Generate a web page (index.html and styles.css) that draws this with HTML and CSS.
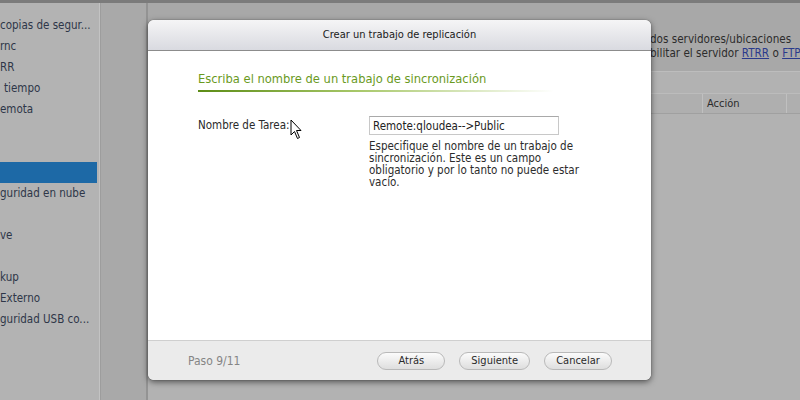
FILE: index.html
```html
<!DOCTYPE html>
<html lang="es">
<head>
    <meta charset="UTF-8">
    <meta name="viewport" content="width=device-width, initial-scale=1.0">
    <link rel="stylesheet" href="styles.css">
    <title>Crear un trabajo de replicación</title>
</head>
<body>
    <div class="topbar"></div>
    <div class="layout">
        <aside class="sidebar">
            <ul>
                <li>copias de segur...</li>
                <li>rnc</li>
                <li>RR</li>
                <li class="indent">tiempo</li>
                <li>emota</li>
                <li></li>
                <li></li>
                <li class="selected"></li>
                <li>guridad en nube</li>
                <li></li>
                <li>ve</li>
                <li></li>
                <li>kup</li>
                <li>Externo</li>
                <li>guridad USB co...</li>
            </ul>
        </aside>
        <main class="main">
            <div class="panel">
                <div class="desc">
                    <p>dos servidores/ubicaciones</p>
                    <p>bilitar el servidor <a href="#">RTRR</a> o <a href="#">FTP</a></p>
                </div>
                <div class="thead">
                    <span class="col-wide"></span>
                    <span class="col-action">Acción</span>
                    <span class="col-rest"></span>
                </div>
            </div>

            <div class="dialog">
                <div class="dlg-head">Crear un trabajo de replicación</div>
                <div class="dlg-body">
                    <h2 class="step-title">Escriba el nombre de un trabajo de sincronización</h2>
                    <div class="field">
                        <label for="taskName">Nombre de Tarea:</label>
                        <div class="field-input">
                            <input type="text" id="taskName" value="Remote:qloudea-->Public">
                            <p class="hint">Especifique el nombre de un trabajo de sincronización. Este es un campo obligatorio y por lo tanto no puede estar vacío.</p>
                        </div>
                    </div>
                    <svg class="cursor" width="13" height="21" viewBox="0 0 13 21">
                        <path d="M1 1 L1 16 L4.5 12.5 L7.5 19.5 L9.5 18.5 L6.5 11.5 L11 11.5 Z" fill="#fff" stroke="#000" stroke-width="1" stroke-linejoin="round"/>
                    </svg>
                </div>
                <div class="dlg-foot">
                    <span class="step">Paso 9/11</span>
                    <div class="buttons">
                        <button>Atrás</button>
                        <button>Siguiente</button>
                        <button>Cancelar</button>
                    </div>
                </div>
            </div>
        </main>
    </div>
</body>
</html>
```

FILE: styles.css
```css
* {
 margin: 0;
 padding: 0;
 box-sizing: border-box;
}

body {
 width: 800px;
 height: 400px;
 overflow: hidden;
 background-color: #a9a9a9;
 font-family: 'DejaVu Sans Condensed', 'DejaVu Sans', Verdana, sans-serif;
 font-size: 11.5px;
 color: #2f2f2f;
}

.topbar {
 height: 3px;
 background-color: #7b7b7b;
}

.layout {
 display: flex;
 height: 397px;
}

/* left menu, scrolled so the start of the labels is cut off */
.sidebar {
 flex-shrink: 0;
 width: 100px;
 background-color: #b3b3b3;
 border-right: 1px solid #c3c3c3;
 padding-top: 12px;
 overflow: hidden;
}

.sidebar ul {
 list-style-type: none;
}

.sidebar li {
 height: 21px;
 line-height: 21px;
 font-size: 11.5px;
 color: #2e3648;
 white-space: nowrap;
}

.sidebar li.indent {
 padding-left: 4px;
}

.sidebar li.selected {
 background-color: #1d69a6;
 margin-right: 2px;
}

.main {
 flex: 1;
 min-width: 0;
 position: relative;
 border-left: 1px solid #9d9d9d;
}

.panel {
 margin-left: 45px;
 height: 100%;
 border-left: 2px solid #939393;
 background-color: #b2b2b2;
 overflow: hidden;
}

.desc {
 height: 69px;
 padding: 29px 0 0 502px;
 background-color: #a8a8a8;
 border-bottom: 1px solid #bdbdbd;
 white-space: nowrap;
 font-size: 11.6px;
 line-height: 14px;
 color: #2c2c2c;
}

.desc a {
 color: #2a3a8c;
}

.thead {
 display: flex;
 height: 21px;
 margin-top: 21px;
 border-top: 1px solid #bcbcbc;
 border-bottom: 1px solid #a0a0a0;
 background-color: #afafaf;
}

.col-wide {
 width: 555px;
 border-right: 1px solid #c0c0c0;
}

.col-action {
 width: 84px;
 padding: 3px 0 0 4px;
 border-right: 1px solid #c0c0c0;
 font-size: 11px;
 color: #2a2a2a;
}

.col-rest {
 flex: 1;
}

/* modal window */
.dialog {
 position: absolute;
 left: 47px;
 top: 17px;
 width: 503px;
 height: 360px;
 display: flex;
 flex-direction: column;
 background-color: #fff;
 border-radius: 6px;
 overflow: hidden;
 box-shadow: 0 2px 6px rgba(0, 0, 0, 0.55), 0 0 1px rgba(0, 0, 0, 0.6);
}

.dlg-head {
 height: 31px;
 line-height: 30px;
 text-align: center;
 background: linear-gradient(#f5f5f6, #d9dae0);
 border-bottom: 1px solid #8c8c8c;
 font-size: 11px;
 color: #1a1a1a;
}

.dlg-body {
 flex: 1;
 position: relative;
 padding: 20px 0 0 50px;
}

.step-title {
 width: 356px;
 padding-bottom: 6px;
 font-size: 12.8px;
 font-weight: normal;
 color: #6a9a1e;
 background: linear-gradient(to right, #5c8c16, #a8c86a 45%, rgba(255, 255, 255, 0)) no-repeat left bottom / 100% 2px;
}

.field {
 display: flex;
 margin-top: 24px;
}

.field label {
 width: 171px;
 padding-top: 2px;
 color: #2a2a2a;
}

.field-input {
 width: 214px;
}

.field-input input {
 width: 190px;
 height: 19px;
 padding: 0 3px;
 border: 1px solid #c8c8c8;
 border-top-color: #a9a9a9;
 font-family: inherit;
 font-size: 11.5px;
 color: #222;
}

.hint {
 margin-top: 5px;
 line-height: 12px;
 color: #2c2c2c;
}

.cursor {
 position: absolute;
 left: 142px;
 top: 68px;
}

.dlg-foot {
 height: 40px;
 display: flex;
 align-items: center;
 justify-content: space-between;
 padding: 0 39px 0 40px;
 background-color: #ebebeb;
 border-top: 1px solid #cfcfcf;
}

.step {
 color: #858585;
 font-size: 12px;
}

.buttons {
 display: flex;
 gap: 14px;
}

.buttons button {
 min-width: 68px;
 height: 18px;
 padding: 0 11px;
 border: 1px solid #b9b9b9;
 border-radius: 9px;
 background: linear-gradient(#fbfbfb, #dedede);
 font-family: inherit;
 font-size: 11px;
 color: #2a2a2a;
}
```
